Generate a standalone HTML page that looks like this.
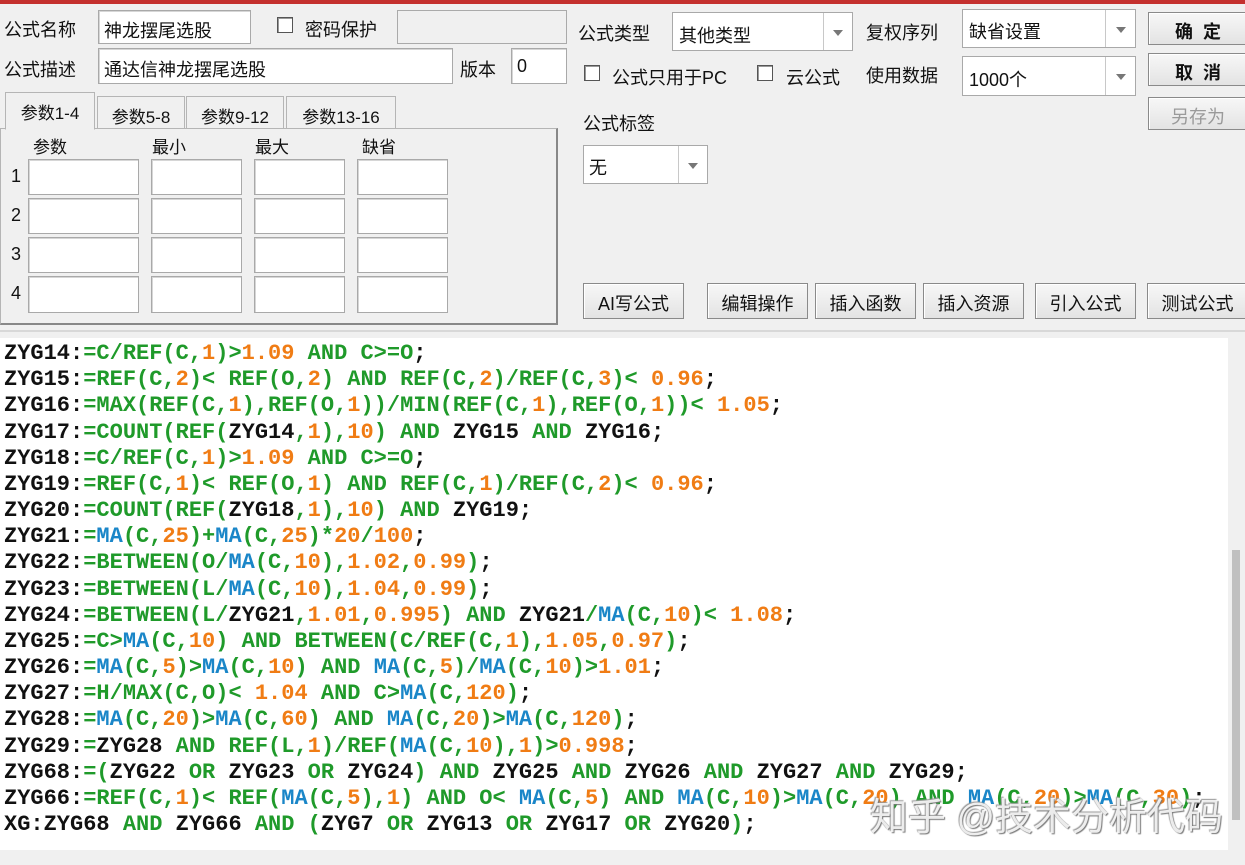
<!DOCTYPE html>
<html><head><meta charset="utf-8"><style>
*{box-sizing:border-box;margin:0;padding:0}
body{width:1245px;height:865px;background:#f0f0f0;position:relative;overflow:hidden;font-family:"Liberation Sans","Noto Sans CJK SC",sans-serif;font-size:18px;color:#111}
.a{position:absolute;white-space:nowrap}
.in{position:absolute;background:#fff;border:1px solid #a9a9a9;box-shadow:inset 1px 1px 0 #d6d6d6}
.cb{position:absolute;width:16px;height:16px;background:#fff;border:1px solid #555;box-shadow:inset 1px 1px 0 #999}
.combo{position:absolute;background:#fff;border:1px solid #a9a9a9}
.combo .arr{position:absolute;top:0;bottom:0;right:0;border-left:1px solid #c8c8c8;background:#fff}
.combo .arr:after{content:"";position:absolute;left:50%;top:50%;margin:-2px 0 0 -5px;border:5px solid transparent;border-top:6px solid #777;border-bottom:0}
.btn{position:absolute;background:linear-gradient(#f7f7f7,#e3e3e3);border:1px solid #8a8a8a;box-shadow:inset 1px 1px 0 #fff;text-align:center;font-size:18px}
.tab{position:absolute;border:1px solid #b5b5b5;border-bottom:none;background:#f0f0f0;text-align:center;font-size:17px}
#code{position:absolute;left:0;top:338px;width:1228px;height:512px;background:#fff;font-family:"Liberation Mono",monospace;font-weight:bold;font-size:22px;line-height:26.17px;padding:3px 0 0 4px;white-space:pre;color:#111}
.g{color:#1f9a2a}.o{color:#f07c14}.b{color:#1a86c8}
</style></head><body>
<div class="a" style="left:0;top:0;width:1245px;height:4px;background:#c4302e"></div>

<div class="a" style="left:4px;top:16px">公式名称</div>
<div class="in" style="left:98px;top:10px;width:153px;height:34px"><span class="a" style="left:5px;top:6px">神龙摆尾选股</span></div>
<div class="cb" style="left:277px;top:17px"></div>
<div class="a" style="left:305px;top:16px">密码保护</div>
<div class="a" style="left:397px;top:10px;width:170px;height:34px;border:1px solid #aaa;background:#f0f0f0"></div>

<div class="a" style="left:4px;top:56px">公式描述</div>
<div class="in" style="left:98px;top:48px;width:355px;height:36px"><span class="a" style="left:5px;top:7px">通达信神龙摆尾选股</span></div>
<div class="a" style="left:460px;top:56px">版本</div>
<div class="in" style="left:511px;top:48px;width:56px;height:36px"><span class="a" style="left:5px;top:7px">0</span></div>

<div class="a" style="left:0;top:128px;width:558px;height:197px;border:1px solid #b5b5b5;border-right:2px solid #888;border-bottom:2px solid #888"></div>
<div class="tab" style="left:5px;top:92px;width:90px;height:38px;padding-top:6px;z-index:2;border-bottom:1px solid #f0f0f0">参数1-4</div>
<div class="tab" style="left:97px;top:96px;width:88px;height:32px;padding-top:6px">参数5-8</div>
<div class="tab" style="left:186px;top:96px;width:98px;height:32px;padding-top:6px">参数9-12</div>
<div class="tab" style="left:286px;top:96px;width:110px;height:32px;padding-top:6px">参数13-16</div>
<div class="a" style="left:33px;top:133px;font-size:17px">参数</div>
<div class="a" style="left:152px;top:133px;font-size:17px">最小</div>
<div class="a" style="left:255px;top:133px;font-size:17px">最大</div>
<div class="a" style="left:362px;top:133px;font-size:17px">缺省</div>
<div class="a" style="left:11px;top:166px">1</div><div class="a" style="left:11px;top:205px">2</div><div class="a" style="left:11px;top:244px">3</div><div class="a" style="left:11px;top:283px">4</div>
<div class="in" style="left:28px;top:159px;width:111px;height:36px"></div><div class="in" style="left:151px;top:159px;width:91px;height:36px"></div><div class="in" style="left:254px;top:159px;width:91px;height:36px"></div><div class="in" style="left:357px;top:159px;width:91px;height:36px"></div>
<div class="in" style="left:28px;top:198px;width:111px;height:36px"></div><div class="in" style="left:151px;top:198px;width:91px;height:36px"></div><div class="in" style="left:254px;top:198px;width:91px;height:36px"></div><div class="in" style="left:357px;top:198px;width:91px;height:36px"></div>
<div class="in" style="left:28px;top:237px;width:111px;height:36px"></div><div class="in" style="left:151px;top:237px;width:91px;height:36px"></div><div class="in" style="left:254px;top:237px;width:91px;height:36px"></div><div class="in" style="left:357px;top:237px;width:91px;height:36px"></div>
<div class="in" style="left:28px;top:276px;width:111px;height:37px"></div><div class="in" style="left:151px;top:276px;width:91px;height:37px"></div><div class="in" style="left:254px;top:276px;width:91px;height:37px"></div><div class="in" style="left:357px;top:276px;width:91px;height:37px"></div>

<div class="a" style="left:578px;top:20px">公式类型</div>
<div class="combo" style="left:672px;top:12px;width:181px;height:39px"><span class="a" style="left:6px;top:9px">其他类型</span><div class="arr" style="width:29px"></div></div>
<div class="a" style="left:866px;top:19px">复权序列</div>
<div class="combo" style="left:962px;top:9px;width:174px;height:39px"><span class="a" style="left:6px;top:8px">缺省设置</span><div class="arr" style="width:30px"></div></div>
<div class="btn" style="left:1148px;top:12px;width:100px;height:33px;padding-top:5px;font-weight:bold">确&nbsp;&nbsp;定</div>
<div class="btn" style="left:1148px;top:53px;width:100px;height:33px;padding-top:5px;font-weight:bold">取&nbsp;&nbsp;消</div>
<div class="btn" style="left:1148px;top:97px;width:100px;height:33px;padding-top:5px;color:#9a9a9a">另存为</div>

<div class="cb" style="left:584px;top:65px"></div>
<div class="a" style="left:612px;top:64px">公式只用于PC</div>
<div class="cb" style="left:757px;top:65px"></div>
<div class="a" style="left:786px;top:64px">云公式</div>
<div class="a" style="left:866px;top:62px">使用数据</div>
<div class="combo" style="left:962px;top:56px;width:174px;height:40px"><span class="a" style="left:6px;top:9px">1000个</span><div class="arr" style="width:30px"></div></div>

<div class="a" style="left:583px;top:110px">公式标签</div>
<div class="combo" style="left:583px;top:145px;width:125px;height:39px"><span class="a" style="left:5px;top:8px">无</span><div class="arr" style="width:29px"></div></div>

<div class="btn" style="left:583px;top:283px;width:101px;height:36px;padding-top:6px">AI写公式</div>
<div class="btn" style="left:707px;top:283px;width:101px;height:36px;padding-top:6px">编辑操作</div>
<div class="btn" style="left:815px;top:283px;width:101px;height:36px;padding-top:6px">插入函数</div>
<div class="btn" style="left:923px;top:283px;width:101px;height:36px;padding-top:6px">插入资源</div>
<div class="btn" style="left:1035px;top:283px;width:101px;height:36px;padding-top:6px">引入公式</div>
<div class="btn" style="left:1147px;top:283px;width:101px;height:36px;padding-top:6px">测试公式</div>

<div class="a" style="left:0;top:330px;width:1245px;height:2px;background:#d8d8d8"></div>
<div id="code">ZYG14:=C/REF(C,1)>1.09 AND C>=O;
ZYG15:=REF(C,2)< REF(O,2) AND REF(C,2)/REF(C,3)< 0.96;
ZYG16:=MAX(REF(C,1),REF(O,1))/MIN(REF(C,1),REF(O,1))< 1.05;
ZYG17:=COUNT(REF(ZYG14,1),10) AND ZYG15 AND ZYG16;
ZYG18:=C/REF(C,1)>1.09 AND C>=O;
ZYG19:=REF(C,1)< REF(O,1) AND REF(C,1)/REF(C,2)< 0.96;
ZYG20:=COUNT(REF(ZYG18,1),10) AND ZYG19;
ZYG21:=MA(C,25)+MA(C,25)*20/100;
ZYG22:=BETWEEN(O/MA(C,10),1.02,0.99);
ZYG23:=BETWEEN(L/MA(C,10),1.04,0.99);
ZYG24:=BETWEEN(L/ZYG21,1.01,0.995) AND ZYG21/MA(C,10)< 1.08;
ZYG25:=C>MA(C,10) AND BETWEEN(C/REF(C,1),1.05,0.97);
ZYG26:=MA(C,5)>MA(C,10) AND MA(C,5)/MA(C,10)>1.01;
ZYG27:=H/MAX(C,O)< 1.04 AND C>MA(C,120);
ZYG28:=MA(C,20)>MA(C,60) AND MA(C,20)>MA(C,120);
ZYG29:=ZYG28 AND REF(L,1)/REF(MA(C,10),1)>0.998;
ZYG68:=(ZYG22 OR ZYG23 OR ZYG24) AND ZYG25 AND ZYG26 AND ZYG27 AND ZYG29;
ZYG66:=REF(C,1)< REF(MA(C,5),1) AND O< MA(C,5) AND MA(C,10)>MA(C,20) AND MA(C,20)>MA(C,30);
XG:ZYG68 AND ZYG66 AND (ZYG7 OR ZYG13 OR ZYG17 OR ZYG20);</div>
<div class="a" style="left:1228px;top:338px;width:17px;height:512px;background:#f0f0f0"></div>
<div class="a" style="left:1232px;top:550px;width:8px;height:270px;background:#c0c0c0"></div>
<div class="a" style="left:0;top:850px;width:1245px;height:15px;background:#f0f0f0"></div>
<div class="a" style="left:870px;top:786px;font-size:38px;color:rgba(255,255,255,0.85);text-shadow:1px 1px 1px #777,-1px -1px 1px #999">知乎 @技术分析代码</div>
<script>
var el=document.getElementById('code');
var lines=el.textContent.split('\n');
el.innerHTML=lines.map(function(l){
 var m=l.match(/^(ZYG\d+|XG)(:=?)(.*)$/);
 var out='<span>'+m[1]+':</span>';var rest=(m[2]==':='?'=':'')+m[3];
 return out+rest.replace(/(ZYG\d+)|(MA)(?=\()|(\d+\.?\d*)|(;)|([^ZM\d;]+|[ZM])/g,function(s,a,b,c,d,e){
  if(a)return '<span>'+a+'</span>';if(b)return '<span class="b">MA</span>';
  if(c)return '<span class="o">'+c+'</span>';if(d)return ';';
  return '<span class="g">'+e.replace(/</g,'&lt;').replace(/>/g,'&gt;')+'</span>';});
}).join('\n');
</script>
</body></html>
